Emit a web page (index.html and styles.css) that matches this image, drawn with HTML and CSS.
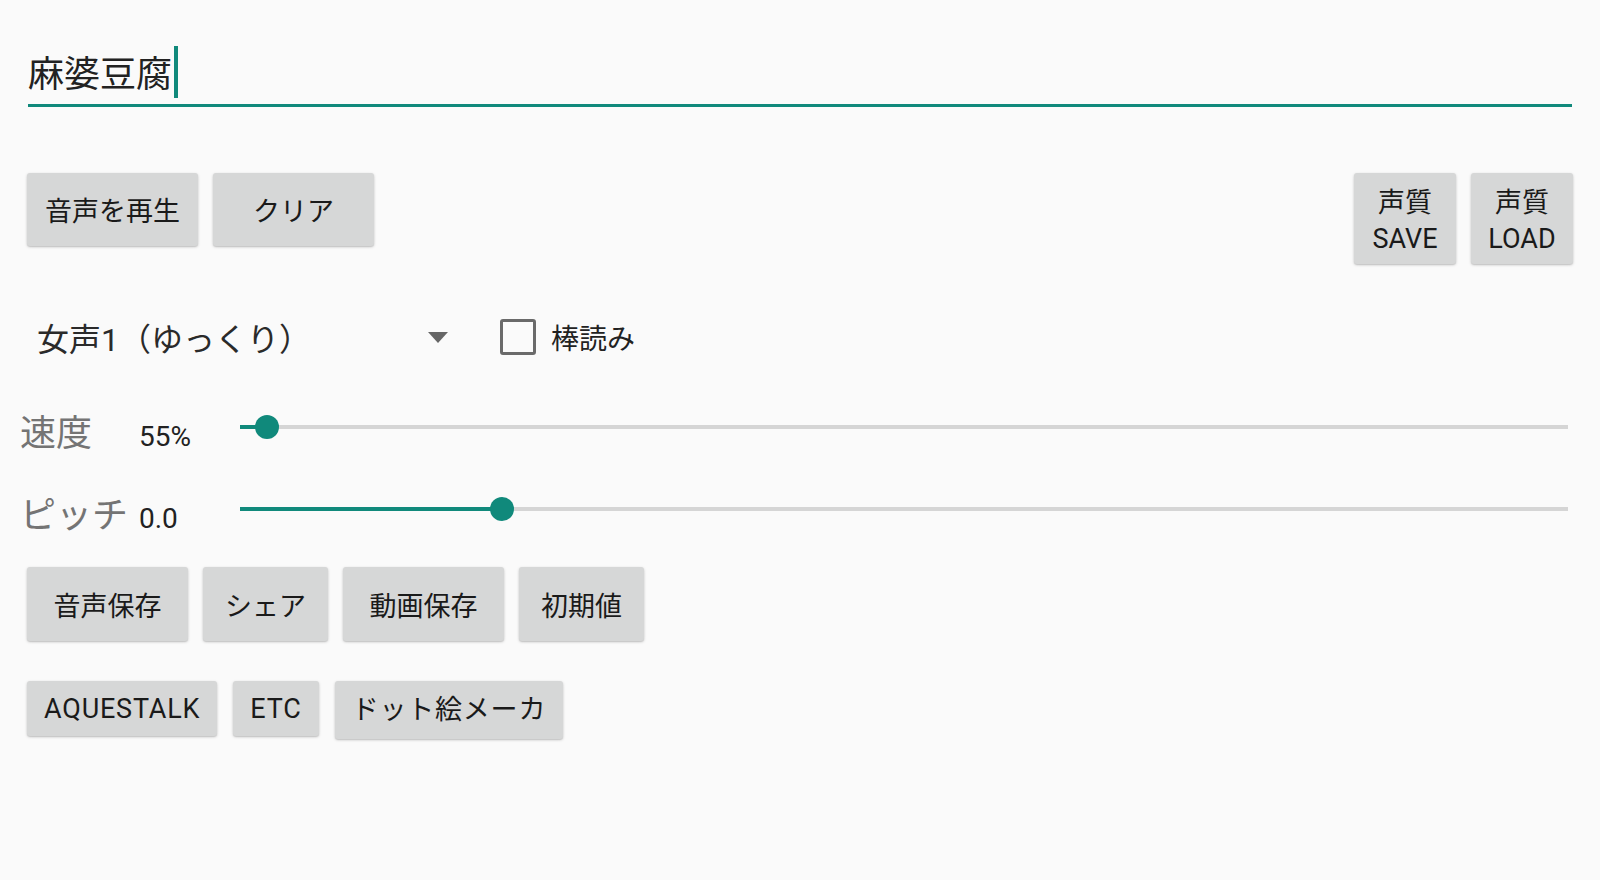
FILE: index.html
```html
<!DOCTYPE html>
<html lang="ja">
<head>
<meta charset="utf-8">
<title>AquesTalk</title>
<link rel="stylesheet" href="styles.css">
</head>
<body>
<div class="app">
  <div class="edit">
    <span class="edit-text">麻婆豆腐</span><span class="cursor"></span>
  </div>

  <div class="row-top">
    <div class="group">
      <button class="btn btn-main">音声を再生</button>
      <button class="btn btn-main">クリア</button>
    </div>
    <div class="group">
      <button class="btn btn-two"><span>声質</span><span>SAVE</span></button>
      <button class="btn btn-two"><span>声質</span><span>LOAD</span></button>
    </div>
  </div>

  <div class="row-voice">
    <div class="spinner"><span>女声1（ゆっくり）</span><span class="caret"></span></div>
    <label class="check"><span class="box"></span><span>棒読み</span></label>
  </div>

  <div class="sliders">
    <div class="srow">
      <span class="slabel">速度</span>
      <span class="sval">55%</span>
      <div class="slider">
        <div class="track"><div class="fill" style="width:2.03%"></div></div>
        <span class="thumb" style="left:2.03%"></span>
      </div>
    </div>
    <div class="srow">
      <span class="slabel">ピッチ</span>
      <span class="sval">0.0</span>
      <div class="slider">
        <div class="track"><div class="fill" style="width:19.73%"></div></div>
        <span class="thumb" style="left:19.73%"></span>
      </div>
    </div>
  </div>

  <div class="btns-mid">
    <button class="btn btn-mid">音声保存</button>
    <button class="btn btn-mid">シェア</button>
    <button class="btn btn-mid">動画保存</button>
    <button class="btn btn-mid">初期値</button>
  </div>

  <div class="btns-low">
    <button class="btn btn-low">AQUESTALK</button>
    <button class="btn btn-low">ETC</button>
    <button class="btn btn-low btn-tall">ドット絵メーカ</button>
  </div>
</div>
</body>
</html>
```

FILE: styles.css
```css
html, body {
  margin: 0;
  padding: 0;
}

body {
  width: 1600px;
  height: 880px;
  overflow: hidden;
  background: #fafafa;
  font-family: Roboto, "Noto Sans CJK JP", sans-serif;
  color: #222;
}

.app {
  display: flex;
  flex-direction: column;
}

/* edit text */
.edit {
  margin: 46px 28px 0;
  height: 52px;
  padding-bottom: 6px;
  border-bottom: 3px solid #10897b;
  display: flex;
  align-items: flex-start;
}

.edit-text {
  font-size: 36px;
  line-height: 46px;
  padding-top: 6px;
  color: #222;
}

.cursor {
  width: 4px;
  height: 52px;
  margin-left: 2px;
  background: #10897b;
}

/* buttons */
.btn {
  border: 0;
  margin: 0;
  background: #d6d7d7;
  border-radius: 3px;
  box-shadow: 0 1px 3px rgba(0, 0, 0, 0.2), 0 1px 1px rgba(0, 0, 0, 0.08);
  font-family: Roboto, "Noto Sans CJK JP", sans-serif;
  font-weight: 400;
  font-size: 27px;
  line-height: 34px;
  color: #1a1a1a;
  padding: 0 18px;
  display: flex;
  align-items: center;
  justify-content: center;
  box-sizing: border-box;
  white-space: nowrap;
}

.row-top {
  display: flex;
  justify-content: space-between;
  align-items: flex-start;
  margin: 66px 27px 0;
}

.group {
  display: flex;
  gap: 15px;
  align-items: flex-start;
}

.btn-main {
  height: 73px;
  min-width: 161px;
  padding-top: 5px;
}

.btn-two {
  width: 102px;
  height: 91px;
  padding: 5px 0 0;
  line-height: 36px;
  flex-direction: column;
}

.btn-two span {
  display: block;
}

/* voice row */
.row-voice {
  display: flex;
  align-items: center;
  height: 54px;
  margin: 46px 0 0 27px;
}

.spinner {
  width: 435px;
  height: 54px;
  box-sizing: border-box;
  padding: 0 14px 0 10px;
  display: flex;
  align-items: center;
  justify-content: space-between;
  font-size: 32px;
  color: #2a2a2a;
}

.caret {
  width: 0;
  height: 0;
  border-left: 10px solid transparent;
  border-right: 10px solid transparent;
  border-top: 11px solid #666;
}

.check {
  display: flex;
  align-items: center;
  gap: 15px;
  margin-left: 38px;
  font-size: 28px;
  color: #222;
}

.box {
  width: 36px;
  height: 36px;
  box-sizing: border-box;
  border: 3px solid #6a6a6a;
  border-radius: 3px;
}

/* sliders */
.sliders {
  display: flex;
  flex-direction: column;
  gap: 22px;
  margin-top: 40px;
}

.srow {
  display: flex;
  align-items: center;
  height: 60px;
  padding-left: 20px;
  margin-right: 32px;
}

.slabel {
  width: 119px;
  flex: none;
  font-size: 36px;
  line-height: 48px;
  color: #747474;
}

.sval {
  width: 101px;
  flex: none;
  font-size: 28px;
  line-height: 40px;
  padding-top: 6px;
  color: #222;
}

.slider {
  flex: 1;
  position: relative;
  height: 24px;
  margin-bottom: 14px;
}

.track {
  position: absolute;
  left: 0;
  right: 0;
  top: 10px;
  height: 4px;
  background: #d5d5d5;
}

.fill {
  height: 100%;
  background: #10897b;
}

.thumb {
  position: absolute;
  top: 0;
  width: 24px;
  height: 24px;
  margin-left: -12px;
  border-radius: 50%;
  background: #10897b;
}

/* lower buttons */
.btns-mid {
  display: flex;
  gap: 15px;
  margin: 21px 27px 0;
}

.btn-mid {
  height: 74px;
  min-width: 161px;
  padding: 5px 22px 0;
}

.btn-mid:nth-child(2),
.btn-mid:nth-child(4) {
  min-width: 0;
}

.btns-low {
  display: flex;
  align-items: flex-start;
  gap: 16px;
  margin: 40px 27px 0;
}

.btn-low {
  height: 55px;
  padding: 0 17px;
  letter-spacing: 0.8px;
}

.btn-tall {
  height: 58px;
}
```
